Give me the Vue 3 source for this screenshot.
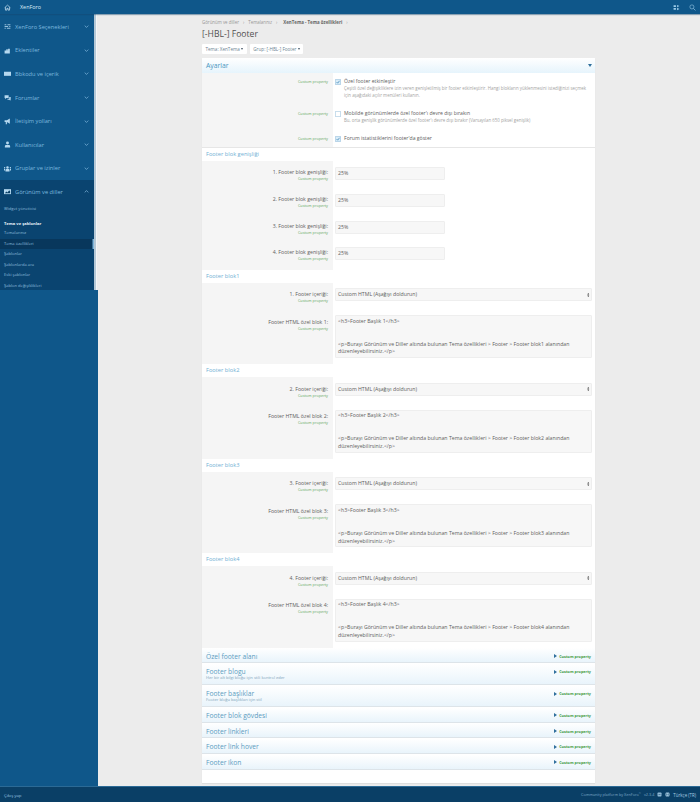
<script setup>
const navItems = [
  { label: 'XenForo Seçenekleri', icon: 'M1 3h3M6 3h5M1 6h6M9 6h2M1 9h2M5 9h6', stroke: true },
  { label: 'Eklentiler', icon: 'M1 11V6h3V4.500a1.200 1.200 0 0 1 2.400 0V6H10v5z M7 6V3h3v3z' },
  { label: 'Bbkodu ve içerik', icon: 'M0 3h12v7H0z' },
  { label: 'Forumlar', icon: 'M1 2h7v5H4L2 9V7H1z M9 5h2.500v5H11v1.500L9 10H6V8h3z' },
  { label: 'İletişim yolları', icon: 'M1 4h4l5-3v9L5 7v3.500H3V7H1z' },
  { label: 'Kullanıcılar', icon: 'M6 1a2.500 2.500 0 1 1 0 5 2.500 2.500 0 0 1 0-5z M1.500 11V9a2 2 0 0 1 2-2h5a2 2 0 0 1 2 2v2z' },
  { label: 'Gruplar ve izinler', icon: 'M6 2a2.200 2.200 0 1 1 0 4.400A2.200 2.200 0 0 1 6 2z M2.500 11V8.500a1.500 1.500 0 0 1 1.500-1.500h4a1.500 1.500 0 0 1 1.500 1.500V11z M1 3.500a1.300 1.300 0 1 1 0 2.600 1.300 1.300 0 0 1 0-2.600z M11 3.500a1.300 1.300 0 1 1 0 2.600 1.300 1.300 0 0 1 0-2.600z M0 7h1.700v2.500H0z M10.300 7H12v2.500h-1.700z' },
]
const subItems = [
  { label: 'Temalarınız' },
  { label: 'Tema özellikleri', selected: true },
  { label: 'Şablonlar' },
  { label: 'Şablonlarda ara' },
  { label: 'Eski şablonlar' },
  { label: 'Şablon değişiklikleri' },
]
const optionRows = [
  { cls: 'opt-tall', checked: true, title: 'Özel footer etkinleştir', hint: 'Çeşitli özel değişikliklere izin veren genişletilmiş bir footer etkinleştirir. Hangi blokların yüklenmesini istediğinizi seçmek için aşağıdaki açılır menüleri kullanın.' },
  { cls: 'opt-mid', checked: false, title: 'Mobilde görünümlerde özel footer\'ı devre dışı bırakın', hint: 'Bu, orta genişlik görünümlerde özel footer\'ı devre dışı bırakır (Varsayılan 650 piksel genişlik)' },
  { cls: 'opt-low', checked: true, title: 'Forum istatistiklerini footer\'da göster', hint: '' },
]
const widths = [1, 2, 3, 4]
const blocks = [1, 2, 3, 4]
const collapsed = [
  { title: 'Özel footer alanı' },
  { title: 'Footer blogu', sub: 'Her bir alt bilgi bloğu için stili kontrol eder' },
  { title: 'Footer başlıklar', sub: 'Footer bloğu başlıkları için stil' },
  { title: 'Footer blok gövdesi' },
  { title: 'Footer linkleri' },
  { title: 'Footer link hover' },
  { title: 'Footer ikon' },
]
</script>

<template>
  <div class="page">
    <header class="topbar">
      <div class="top-left">
        <svg class="home" viewBox="0 0 12 12"><path d="M1 6.500 6 2l5 4.500M2.500 5.500V10.500h2.500V7.500h2V10.500h2.500V5.500" fill="none" stroke="#cfe6f5" stroke-width="1.200"/></svg>
        <span class="brand">XenForo</span>
      </div>
      <div class="top-right">
        <svg class="ti" viewBox="0 0 12 12"><path d="M1 2h4v3H1zM1 7h4v3H1z" fill="#9fcdea"/><path d="M7 1.500 11 3.500 7 5.500zM7 6.500 11 8.500 7 10.500z" fill="#9fcdea"/></svg>
        <svg class="ti" viewBox="0 0 12 12"><circle cx="5" cy="5" r="3.500" fill="none" stroke="#8fc0e0" stroke-width="1.100"/><path d="M7.500 7.500 11 11" stroke="#8fc0e0" stroke-width="1.300"/></svg>
      </div>
    </header>

    <div class="middle">
      <aside class="side">
        <div class="side-top">
          <nav class="nav">
            <div v-for="n in navItems" :key="n.label" class="nav-item">
              <svg class="nav-ic" viewBox="0 0 12 12">
                <path :d="n.icon" :fill="n.stroke ? 'none' : '#b5d8ef'" :stroke="n.stroke ? '#b5d8ef' : 'none'" :stroke-width="n.stroke ? 1.400 : 0"/>
              </svg>
              <span class="nav-label">{{ n.label }}</span>
              <svg class="chev" viewBox="0 0 8 5"><path d="M1 1l3 3 3-3" fill="none" stroke="#8fc4e8" stroke-width="1.100"/></svg>
            </div>
            <div class="nav-open">
              <div class="nav-item">
                <svg class="nav-ic" viewBox="0 0 12 12"><path d="M0 2h12v8.500H0z" fill="#b5d8ef"/><path d="M1.500 9l2.500-3 2 1.500L9 4l1.500 2v3z" fill="#0a3f66"/></svg>
                <span class="nav-label">Görünüm ve diller</span>
                <svg class="chev" viewBox="0 0 8 5"><path d="M1 4l3-3 3 3" fill="none" stroke="#8fc4e8" stroke-width="1.100"/></svg>
              </div>
              <div class="sub widget">Widget yöneticisi</div>
              <div class="sub-head">Tema ve şablonlar</div>
              <div v-for="s in subItems" :key="s.label" class="sub" :class="{ selected: s.selected }">{{ s.label }}</div>
            </div>
          </nav>
          <div class="strip"></div>
        </div>
      </aside>

      <main class="main">
        <div class="content">
          <div class="crumbs">
            <span>Görünüm ve diller</span><i>›</i><span>Temalarınız</span><i>›</i><b>XenTema - Tema özellikleri</b><i>›</i>
          </div>
          <h1 class="title">[-HBL-] Footer</h1>
          <div class="btns">
            <span class="btn">Tema: XenTema <em></em></span>
            <span class="btn">Grup: [-HBL-] Footer <em></em></span>
          </div>

          <section class="panel">
            <div class="panel-head">
              <span>Ayarlar</span>
              <em class="down"></em>
            </div>

            <div v-for="o in optionRows" :key="o.title" class="row" :class="o.cls">
              <div class="lbl"><small>Custom property</small></div>
              <div class="val check-val">
                <svg class="cb" viewBox="0 0 10 10">
                  <rect x=".5" y=".5" width="9" height="9" rx="1" :fill="o.checked ? '#d9ecf8' : '#fff'" stroke="#8db9d6"/>
                  <path v-if="o.checked" d="M2.500 5l2 2 3-4" fill="none" stroke="#3d86b8" stroke-width="1.200"/>
                </svg>
                <div class="check-text">
                  <div class="check-title">{{ o.title }}</div>
                  <div v-if="o.hint" class="hint">{{ o.hint }}</div>
                </div>
              </div>
            </div>

            <div class="sec-head">Footer blok genişliği</div>
            <div class="width-group">
              <div v-for="w in widths" :key="w" class="row row-input">
                <div class="lbl with-title"><span>{{ w }}. Footer blok genişliği:</span><small>Custom property</small></div>
                <div class="val"><div class="field short">25%</div></div>
              </div>
            </div>

            <template v-for="b in blocks" :key="b">
              <div class="sec-head">Footer blok{{ b }}</div>
              <div class="row row-select">
                <div class="lbl with-title"><span>{{ b }}. Footer içeriği:</span><small>Custom property</small></div>
                <div class="val">
                  <div class="field select">
                    <span>Custom HTML (Aşağıyı doldurun)</span>
                    <svg class="updown" viewBox="0 0 6 10"><path d="M3 0l2.500 4h-5zM3 10 .5 6h5z" fill="#333"/></svg>
                  </div>
                </div>
              </div>
              <div class="row row-area">
                <div class="lbl with-title"><span>Footer HTML özel blok {{ b }}:</span><small>Custom property</small></div>
                <div class="val">
                  <div class="field area">
                    <div>&lt;h3&gt;Footer Başlık {{ b }}&lt;/h3&gt;</div>
                    <div class="area-p">&lt;p&gt;Burayı Görünüm ve Diller altında bulunan Tema özellikleri &gt; Footer &gt; Footer blok{{ b }} alanından düzenleyebilirsiniz.&lt;/p&gt;</div>
                  </div>
                </div>
              </div>
            </template>

            <div class="collapsed">
              <div v-for="c in collapsed" :key="c.title" class="col-head" :class="{ 'has-sub': c.sub }">
                <div class="col-text">
                  <div class="col-title">{{ c.title }}</div>
                  <div v-if="c.sub" class="col-sub">{{ c.sub }}</div>
                </div>
                <div class="col-right">
                  <em class="right"></em>
                  <span>Custom property</span>
                </div>
              </div>
            </div>
          </section>
        </div>
      </main>
    </div>

    <footer class="foot">
      <span class="logout">Çıkış yap</span>
      <div class="foot-right">
        <span class="cp">Community platform by XenForo<sup>®</sup></span>
        <span class="cp">v2.3.4</span>
        <svg class="fi" viewBox="0 0 10 10"><rect x="1" y="1" width="8" height="8" rx="1.500" fill="#8fb8d4"/><path d="M3 5h4" stroke="#0a3f66"/></svg>
        <svg class="fi" viewBox="0 0 10 10"><circle cx="5" cy="5" r="4.500" fill="#a9cde4"/><path d="M.5 5h9M5 .5c-3 3-3 6 0 9M5 .5c3 3 3 6 0 9" fill="none" stroke="#0a3f66" stroke-width=".6"/></svg>
        <span class="lang">Türkçe (TR)</span>
      </div>
    </footer>
  </div>
</template>

<style>
html, body { margin: 0; padding: 0; background: #ececec; }
</style>

<style scoped>
.page {
  width: 700px;
  height: 802px;
  display: flex;
  flex-direction: column;
  overflow: hidden;
  font-family: "Open Sans", "Noto Sans", sans-serif;
  color: #555;
  background: #ececec;
}
.topbar {
  height: 14px;
  flex: none;
  background: #0f578a;
  box-shadow: 0 1px 1px rgba(20, 70, 110, .45);
  display: flex;
  align-items: center;
  justify-content: space-between;
  padding: 0 4px;
  position: relative;
  z-index: 2;
}
.top-left { display: flex; align-items: center; }
.home { width: 7px; height: 7px; }
.brand { margin-left: 9px; font-size: 5.400px; color: #dcecf7; }
.top-right { display: flex; gap: 9px; align-items: center; }
.ti { width: 7px; height: 7px; }

.middle { flex: 1; display: flex; min-height: 0; }
.side { width: 98px; flex: none; background: #0f578a; }
.side-top { display: flex; height: 276px; overflow: hidden; }
.nav { width: 93.500px; flex: none; background: #0f578a; padding-top: 1px; }
.strip {
  width: 4.500px;
  background: linear-gradient(90deg, #b5c8d6 0 2.500px, #f4f6f8 2.500px 3.500px, #ececec 3.500px);
}
.nav-item {
  height: 23.600px;
  display: flex;
  align-items: center;
  padding: 0 4px;
  box-sizing: border-box;
}
.nav-ic { width: 7px; height: 7px; flex: none; }
.nav-label { margin-left: 4px; flex: 1; font-size: 5.700px; color: #7db8df; white-space: nowrap; }
.chev { width: 5px; height: 3px; margin-right: 1px; }
.nav-open { background: #0a4470; min-height: 120px; }
.sub {
  height: 10.450px;
  line-height: 10.450px;
  padding-left: 4px;
  font-size: 4.100px;
  color: #8fbddc;
}
.widget { margin-top: 0; margin-bottom: 5.200px; }
.sub-head { height: 9px; line-height: 9px; padding-left: 4px; font-size: 4.100px; font-weight: 700; color: #e6f1f9; }
.sub.selected { background: #08375c; box-shadow: inset -1.500px 0 0 #7fb6dc; }

.main { flex: 1; min-width: 0; }
.content { width: 393px; margin-left: 104px; padding-top: 4px; }
.crumbs {
  height: 8px;
  display: flex;
  align-items: center;
  gap: 3px;
  font-size: 4.400px;
  color: #969696;
}
.crumbs i { font-style: normal; margin: 0 1px; }
.crumbs b { color: #666; font-size: 4.400px; margin-left: 2px; }
.title { margin: 2px 0 0; height: 13px; line-height: 13px; font-size: 8.600px; font-weight: 400; color: #505050; }
.btns { display: flex; gap: 3px; margin-top: 3px; height: 10px; }
.btn {
  background: #fff;
  border-radius: 1px;
  padding: 0 3.500px;
  line-height: 10px;
  font-size: 4.600px;
  color: #6d8493;
  display: flex;
  align-items: center;
  gap: 1.500px;
}
.btn em { width: 0; height: 0; border: 1.300px solid transparent; border-top: 2px solid #456; border-bottom: 0; }

.panel { margin-top: 4px; height: 725px; background: #fff; box-shadow: 0 1px 1px rgba(0,0,0,.06); }
.panel-head {
  height: 15px;
  display: flex;
  align-items: center;
  justify-content: space-between;
  padding: 0 4px;
  background: linear-gradient(#fff, #e6f4fc);
  color: #4a97bf;
  font-size: 6.800px;
}
.down { width: 0; height: 0; border: 2px solid transparent; border-top: 3px solid #2f6f9c; border-bottom: 0; margin-right: -1px; }

.row { display: flex; }
.lbl {
  width: 131px;
  flex: none;
  box-sizing: border-box;
  background: #f5f5f5;
  text-align: right;
  padding: 5px 5px 0 0;
  display: flex;
  flex-direction: column;
  align-items: flex-end;
}
.lbl span { font-size: 5.200px; line-height: 7px; color: #606060; white-space: nowrap; }
.lbl small { font-size: 3.800px; line-height: 5px; color: #63a863; white-space: nowrap; }
.val { flex: 1; min-width: 0; padding: 6px 3px 0 2px; box-sizing: border-box; }

.opt-tall { height: 32px; }
.opt-mid { height: 25px; }
.opt-low { height: 18px; border-bottom: 1px solid #e6e6e6; box-sizing: border-box; }
.opt-tall .lbl, .opt-mid .lbl, .opt-low .lbl { padding-top: 6px; }
.check-val { display: flex; gap: 2px; padding-top: 5px; }
.cb { width: 6px; height: 6px; flex: none; margin: .5px 1px 0 0; }
.check-title { font-size: 5.100px; line-height: 7px; color: #606060; white-space: nowrap; }
.hint { font-size: 4.400px; line-height: 7px; color: #a3a3a3; }

.sec-head {
  height: 13px;
  line-height: 13px;
  padding-left: 4px;
  font-size: 5.700px;
  color: #72b0d4;
  background: #fff;
}
.width-group { padding-bottom: 1.500px; background: linear-gradient(90deg, #f5f5f5 131px, #fff 131px); }
.row-input { height: 26.750px; }
.row-input .lbl { padding-top: 8px; }
.row-select { height: 27px; }
.row-select .lbl { padding-top: 8.500px; }
.row-select .val { padding-top: 5.500px; }
.row-area { height: 54.670px; }
.row-area .lbl { padding-top: 9px; }
.row-area .val { padding-top: 5.500px; }
.field {
  box-sizing: border-box;
  background: #f7f7f7;
  border: 1px solid #eeeeee;
  border-radius: 1px;
  font-size: 5.200px;
  color: #606060;
}
.short { width: 110px; height: 13px; line-height: 11px; padding-left: 2px; }
.select {
  height: 13px;
  line-height: 11px;
  padding: 0 1.500px 0 2px;
  display: flex;
  justify-content: space-between;
  align-items: center;
}
.updown { width: 2.500px; height: 4px; }
.area { height: 43px; padding: 1.500px 2px; line-height: 7.700px; }
.area-p { margin-top: 15.300px; }

.collapsed { display: flex; flex-direction: column; gap: .7px; padding-top: .3px; }
.col-head {
  height: 14px;
  flex: none;
  box-sizing: content-box;
  display: flex;
  justify-content: space-between;
  padding: 0 4px;
  background: linear-gradient(#fff, #e9f4fb);
  border-bottom: .6px solid #dde4e9;
}
.col-head.has-sub { height: 20.100px; }
.col-text { padding-top: 3.300px; }
.col-title { font-size: 6.700px; line-height: 9px; color: #5b9cbf; white-space: nowrap; }
.col-sub { font-size: 4.050px; line-height: 4px; color: #7ea3ba; white-space: nowrap; }
.col-right {
  display: flex;
  align-items: center;
  gap: 2.500px;
  height: 15.500px;
  font-size: 3.750px;
  font-weight: 700;
  color: #3f9a3f;
}
.right { width: 0; height: 0; border: 2px solid transparent; border-left: 3px solid #2f6f9c; border-right: 0; }

.foot {
  height: 16px;
  flex: none;
  background: #0a3f66;
  border-top: 1px solid #2b6a96;
  box-sizing: border-box;
  display: flex;
  align-items: center;
  justify-content: space-between;
  padding: 0 4px;
}
.logout { font-size: 4.300px; color: #9cc6e3; }
.foot-right { display: flex; align-items: center; gap: 3px; }
.cp { font-size: 3.800px; color: #7fa9c6; }
.cp sup { font-size: 2.500px; line-height: 0; }
.fi { width: 5px; height: 5px; }
.lang { font-size: 4.400px; color: #a9cde4; }
</style>
